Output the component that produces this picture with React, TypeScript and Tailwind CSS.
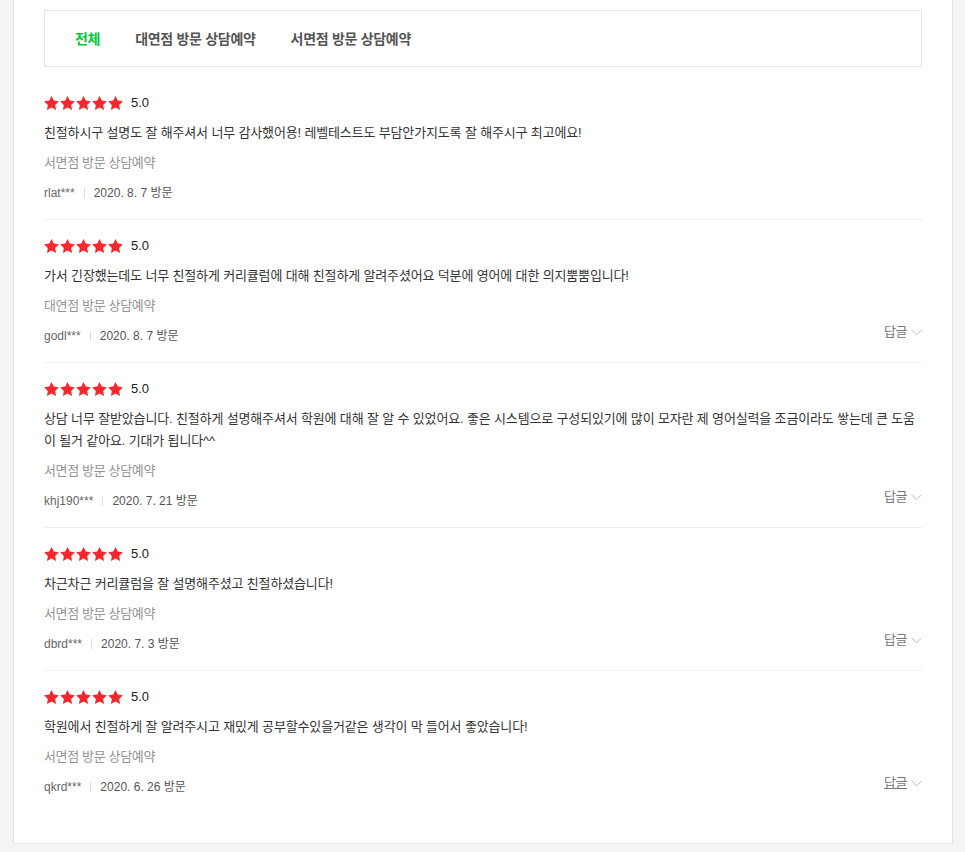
const reviews = [
  {
    text: "친절하시구 설명도 잘 해주셔서 너무 감사했어용! 레벨테스트도 부담안가지도록 잘 해주시구 최고에요!",
    branch: "서면점 방문 상담예약",
    user: "rlat***",
    date: "2020. 8. 7 방문",
    reply: false,
  },
  {
    text: "가서 긴장했는데도 너무 친절하게 커리큘럼에 대해 친절하게 알려주셨어요 덕분에 영어에 대한 의지뿜뿜입니다!",
    branch: "대연점 방문 상담예약",
    user: "godl***",
    date: "2020. 8. 7 방문",
    reply: true,
  },
  {
    text: "상담 너무 잘받았습니다. 친절하게 설명해주셔서 학원에 대해 잘 알 수 있었어요. 좋은 시스템으로 구성되있기에 많이 모자란 제 영어실력을 조금이라도 쌓는데 큰 도움이 될거 같아요. 기대가 됩니다^^",
    branch: "서면점 방문 상담예약",
    user: "khj190***",
    date: "2020. 7. 21 방문",
    reply: true,
  },
  {
    text: "차근차근 커리큘럼을 잘 설명해주셨고 친절하셨습니다!",
    branch: "서면점 방문 상담예약",
    user: "dbrd***",
    date: "2020. 7. 3 방문",
    reply: true,
  },
  {
    text: "학원에서 친절하게 잘 알려주시고 재밌게 공부할수있을거같은 생각이 막 들어서 좋았습니다!",
    branch: "서면점 방문 상담예약",
    user: "qkrd***",
    date: "2020. 6. 26 방문",
    reply: true,
    hover: true,
  },
];

const Star = () => (
  <svg width="15" height="14" viewBox="2 2 20 19" className="fill-[#f5282f]">
    <path d="M12 2l3.09 6.26L22 9.27l-5 4.87 1.18 6.88L12 17.77l-6.18 3.25L7 14.14 2 9.27l6.91-1.01L12 2z" />
  </svg>
);

const App = () => {
  return (
    <div className="min-h-[852px] bg-[#f4f4f4] font-['Liberation_Sans','Noto_Sans_CJK_KR',sans-serif]">
      <main className="ml-[13px] w-[940px] bg-white border-x border-b border-[#e5e5e5] px-[30px] pt-[10px] pb-[30px]">
        {/* tabs */}
        <div className="h-[57px] border border-[#e3e3e3] flex items-center gap-[35px] pl-[30px] pt-[2px] text-[14px] font-bold tracking-[-0.3px] text-[#555]">
          <div className="text-[#00c73c] cursor-pointer">전체</div>
          <div className="cursor-pointer">대연점 방문 상담예약</div>
          <div className="cursor-pointer">서면점 방문 상담예약</div>
        </div>

        <div className="mt-[10px]">
          {reviews.map((r, i) => (
            <div
              key={i}
              className={
                i === reviews.length - 1
                  ? "pt-[17px] pb-[16px]"
                  : "pt-[17px] pb-[16px] border-b border-[#eee]"
              }
            >
              <div className="h-[18px] flex items-center">
                <div className="flex gap-[1px]">
                  <Star />
                  <Star />
                  <Star />
                  <Star />
                  <Star />
                </div>
                <span className="ml-[8px] text-[13px] text-[#222]">5.0</span>
              </div>
              <p className="mt-[10px] text-[13px] leading-[22px] tracking-[-0.15px] text-[#333]">{r.text}</p>
              <div className="mt-[9px] text-[13px] leading-[20px] tracking-[-0.35px] text-[#939393]">{r.branch}</div>
              <div className="mt-[10px] h-[20px] flex items-center text-[12px] leading-[20px]">
                <span className="text-[#666]">{r.user}</span>
                <span className="mx-[9px] w-px h-[10px] bg-[#ddd]" />
                <span className="text-[#555]">{r.date}</span>
                {r.reply && (
                  <div className="ml-auto self-start -mt-[4px] flex items-center gap-[4px] text-[13px] tracking-[-0.5px] text-[#777] cursor-pointer">
                    <span className={r.hover ? "underline" : ""}>답글</span>
                    <svg width="11" height="7" viewBox="0 0 11 7" fill="none" className="stroke-[#bbb]">
                      <path d="M0.5 0.8L5.5 5.8L10.5 0.8" strokeWidth="1" />
                    </svg>
                  </div>
                )}
              </div>
            </div>
          ))}
        </div>
      </main>
    </div>
  );
};

export default App;
